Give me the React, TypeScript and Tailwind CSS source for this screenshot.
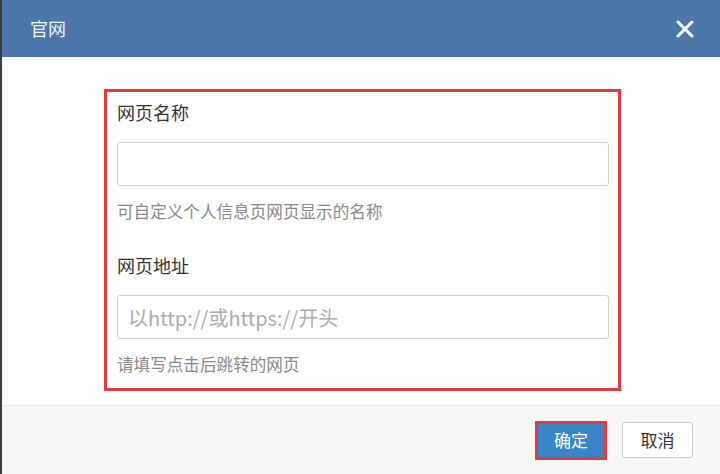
const font = { fontFamily: '"Microsoft YaHei", "Noto Sans CJK SC", "Noto Sans", sans-serif' };

const Field = ({
  label,
  placeholder,
  hint,
}: {
  label: string;
  placeholder?: string;
  hint: string;
}) => (
  <div className="flex flex-col">
    <label className="text-[18px] leading-[24px] text-[#333]">{label}</label>
    <input
      className="mt-[18px] h-[44px] w-[492px] rounded-[3px] border border-[#cfcfcf] bg-white px-[10px] text-[20px] text-[#333] outline-none placeholder:text-[#acacac]"
      placeholder={placeholder}
    />
    <p className="mt-[15px] text-[16.6px] leading-[20px] text-[#8a8a8a]">{hint}</p>
  </div>
);

const App = () => {
  return (
    <div
      className="flex h-[474px] w-[720px] flex-col overflow-hidden border-l-2 border-[#3c3c3c] bg-white"
      style={font}
    >
      <div className="flex h-[57px] shrink-0 items-center justify-between bg-[#4a76a9] pl-[28px] pr-[26px]">
        <span className="text-[18px] text-[#eef3f9]">官网</span>
        <button className="text-white">
          <svg width="18" height="18" viewBox="0 0 18 18">
            <path
              d="M2 2L16 16M16 2L2 16"
              stroke="currentColor"
              strokeWidth="3"
              strokeLinecap="round"
            />
          </svg>
        </button>
      </div>

      <div className="flex h-[348px] shrink-0 items-start bg-[#fefefe] pl-[102px] pt-[32px]">
        <div className="flex h-[302px] w-[517px] flex-col gap-[32px] border-[3px] border-[#e3393f] pl-[10px] pt-[8px]">
          <Field label="网页名称" hint="可自定义个人信息页网页显示的名称" />
          <Field
            label="网页地址"
            placeholder="以http://或https://开头"
            hint="请填写点击后跳转的网页"
          />
        </div>
      </div>

      <div className="flex flex-1 items-center justify-end gap-[15px] border-t border-[#e6e6e6] bg-[#f7f7f7] pr-[27px]">
        <div className="flex h-[39px] w-[72px] border-[3px] border-[#e3393f]">
          <button className="flex-1 bg-[#3a85c7] text-[17px] text-white">确定</button>
        </div>
        <button className="h-[36px] w-[71px] rounded-[3px] border border-[#c8c8c8] bg-white text-[17px] text-[#333]">
          取消
        </button>
      </div>
    </div>
  );
};

export default App;
